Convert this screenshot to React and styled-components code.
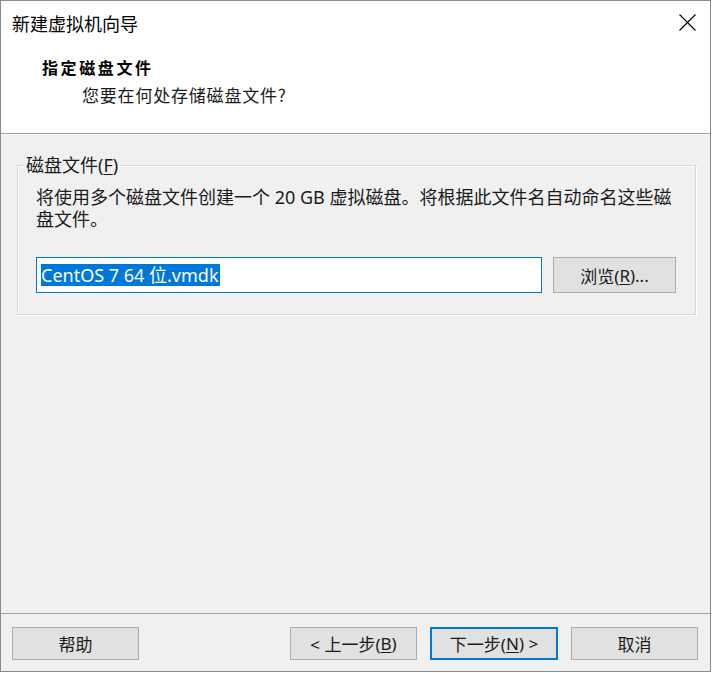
import React from "react";
import styled, { createGlobalStyle } from "styled-components";

const Global = createGlobalStyle`
  html, body { margin: 0; padding: 0; background: #ffffff; }
  body { font-family: "Noto Sans", "Noto Sans CJK SC", sans-serif; }
`;

const Window = styled.div`
  width: 711px;
  height: 672px;
  box-sizing: border-box;
  border: 1px solid #8a8a8a;
  display: flex;
  flex-direction: column;
  background: #f0f0f0;
`;

const TitleBar = styled.div`
  height: 43px;
  background: #ffffff;
  display: flex;
  align-items: center;
  justify-content: space-between;
  padding: 0 14px 0 11px;
`;

const TitleText = styled.span`
  font-family: "Noto Sans CJK SC", sans-serif;
  font-size: 18px;
  color: #000;
  line-height: 22px;
`;

const CloseBtn = styled.span`
  display: flex;
  width: 18px;
  height: 18px;
  align-items: center;
  justify-content: center;
`;

const Header = styled.div`
  height: 90px;
  box-sizing: border-box;
  background: #ffffff;
  border-bottom: 1px solid #a0a0a0;
  padding: 12px 0 0 41px;
  display: flex;
  flex-direction: column;
  gap: 6px;
`;

const HeaderTitle = styled.div`
  font-family: "Noto Sans CJK SC", sans-serif;
  font-weight: 700;
  font-size: 16px;
  letter-spacing: 2.6px;
  line-height: 22px;
  color: #000;
`;

const HeaderSub = styled.div`
  font-family: "Noto Sans CJK SC", sans-serif;
  font-size: 17px;
  letter-spacing: 0.8px;
  line-height: 22px;
  color: #1a1a1a;
  padding-left: 40px;
`;

const Body = styled.div`
  flex: 1;
  border-top: 1px solid #ffffff;
  padding: 19px 14px 0 16px;
`;

const Group = styled.fieldset`
  margin: 0;
  padding: 10px 18px 21px 18px;
  border: 1px solid #d9d9d9;
  box-shadow: inset 1px 1px 0 #ffffff, 1px 1px 0 #ffffff;
`;

const Legend = styled.legend`
  margin-left: -11px;
  padding: 0 1px;
  font-size: 18px;
  line-height: 22px;
  color: #1a1a1a;
`;

const Desc = styled.p`
  margin: 0;
  font-size: 18px;
  line-height: 22px;
  color: #1a1a1a;
`;

const PathRow = styled.div`
  display: flex;
  gap: 11px;
  margin-top: 27px;
  padding-right: 1px;
`;

const PathField = styled.div`
  width: 506px;
  height: 36px;
  box-sizing: border-box;
  border: 1px solid #0078d7;
  background: #ffffff;
  display: flex;
  align-items: center;
  padding-left: 4px;
`;

const Selected = styled.span`
  background: #0078d7;
  color: #ffffff;
  font-size: 18px;
  line-height: 22px;
  padding-right: 1px;
`;

const Button = styled.button`
  width: ${(p) => p.$w || 127}px;
  height: ${(p) => p.$h || 33}px;
  box-sizing: border-box;
  margin: 0;
  padding: 0;
  background: #e1e1e1;
  border: ${(p) => (p.$default ? "2px solid #0078d7" : "1px solid #adadad")};
  font-family: "Noto Sans", "Noto Sans CJK SC", sans-serif;
  font-size: 17px;
  color: #1a1a1a;
  display: flex;
  align-items: center;
  justify-content: center;
`;

const Key = styled.u`
  text-decoration: underline;
  text-underline-offset: 2px;
`;

const Footer = styled.div`
  border-top: 1px solid #a0a0a0;
  padding: 13px 12px 11px 11px;
  display: flex;
  align-items: center;
`;

const Spacer = styled.div`
  flex: 1;
`;

const NavGroup = styled.div`
  display: flex;
  gap: 13px;
`;

export default function App() {
  return (
    <>
      <Global />
      <Window>
        <TitleBar>
          <TitleText>新建虚拟机向导</TitleText>
          <CloseBtn>
            <svg width="17" height="17" viewBox="0 0 17 17">
              <path d="M0.5 0.5 L16.5 16.5 M16.5 0.5 L0.5 16.5" stroke="#000" strokeWidth="1.1" fill="none" />
            </svg>
          </CloseBtn>
        </TitleBar>
        <Header>
          <HeaderTitle>指定磁盘文件</HeaderTitle>
          <HeaderSub>您要在何处存储磁盘文件?</HeaderSub>
        </Header>
        <Body>
          <Group>
            <Legend>
              磁盘文件(<Key>F</Key>)
            </Legend>
            <Desc>
              将使用多个磁盘文件创建一个 20 GB 虚拟磁盘。将根据此文件名自动命名这些磁盘文件。
            </Desc>
            <PathRow>
              <PathField>
                <Selected>CentOS 7 64 位.vmdk</Selected>
              </PathField>
              <Button $w={123} $h={36}>
                浏览(<Key>R</Key>)...
              </Button>
            </PathRow>
          </Group>
        </Body>
        <Footer>
          <Button>帮助</Button>
          <Spacer />
          <NavGroup>
            <Button>
              {"< 上一步("}<Key>B</Key>)
            </Button>
            <Button $default $w={128}>
              下一步(<Key>N</Key>{") >"}
            </Button>
            <Button>取消</Button>
          </NavGroup>
        </Footer>
      </Window>
    </>
  );
}
